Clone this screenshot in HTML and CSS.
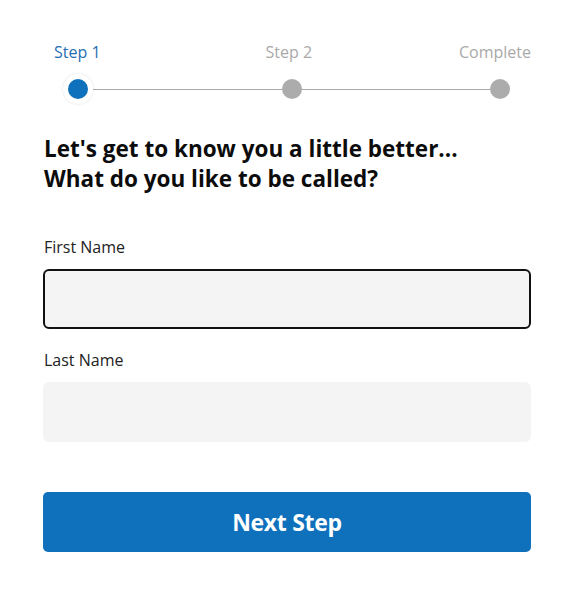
FILE: index.html
```html
<!DOCTYPE html>
<html lang="en">
<head>
<meta charset="utf-8">
<title>Step 1</title>
<link rel="stylesheet" href="styles.css">
</head>
<body>
<main class="page">
  <div class="stepper">
    <div class="step-labels">
      <span class="step-label active">Step 1</span>
      <span class="step-label step-mid">Step 2</span>
      <span class="step-label">Complete</span>
    </div>
    <div class="step-track">
      <span class="dot dot-active"></span>
      <span class="seg"></span>
      <span class="dot"></span>
      <span class="seg"></span>
      <span class="dot"></span>
    </div>
  </div>
  <h1 class="title">Let's get to know you a little better...<br>What do you like to be called?</h1>
  <form class="form">
    <label class="field">
      <span class="field-label">First Name</span>
      <input class="input input-focus" type="text">
    </label>
    <label class="field">
      <span class="field-label">Last Name</span>
      <input class="input" type="text">
    </label>
    <button class="btn" type="button">Next Step</button>
  </form>
</main>
</body>
</html>
```
FILE: styles.css
```css
html, body {
  margin: 0;
  padding: 0;
  background: #ffffff;
}
body {
  font-family: "Open Sans", "Noto Sans", sans-serif;
  color: #111111;
}
.page {
  width: 488px;
  margin-left: 43px;
  padding-top: 41px;
}
.stepper {
  display: flex;
  flex-direction: column;
}
.step-labels {
  display: flex;
  justify-content: space-between;
  padding-left: 11px;
}
.step-label {
  font-size: 16px;
  line-height: 22px;
  color: #a9a9a9;
}
.step-label.active {
  color: #1f6fb2;
}
.step-mid {
  margin-left: 18px;
}
.step-track {
  display: flex;
  align-items: center;
  margin-top: 11px;
  padding-left: 20px;
  padding-right: 21px;
  height: 30px;
}
.seg {
  flex: 1;
  height: 1px;
  background: #a8a8a8;
}
.dot {
  width: 20px;
  height: 20px;
  border-radius: 50%;
  background: #acacac;
  flex: none;
}
.dot-active {
  background: #0f71bb;
  border: 5px solid #ffffff;
  box-shadow: 0 0 3px rgba(0, 0, 0, 0.12);
}
.title {
  margin: 30px 0 0 1px;
  font-size: 22.5px;
  line-height: 30px;
  font-weight: 700;
  color: #0c0c0c;
}
.form {
  display: flex;
  flex-direction: column;
  margin-top: 43px;
}
.field {
  display: flex;
  flex-direction: column;
  gap: 12px;
}
.field + .field {
  margin-top: 21px;
}
.field-label {
  font-size: 16px;
  line-height: 20px;
  color: #222222;
  padding-left: 1px;
}
.input {
  box-sizing: border-box;
  height: 60px;
  width: 100%;
  margin: 0;
  border: none;
  border-radius: 6px;
  background: #f4f4f4;
  font: inherit;
  padding: 0 14px;
}
.input-focus {
  border: 2px solid #111111;
}
.btn {
  margin-top: 50px;
  height: 60px;
  width: 100%;
  border: none;
  border-radius: 5px;
  background: #0f71bb;
  color: #ffffff;
  font-family: "Open Sans", "Noto Sans", sans-serif;
  font-size: 23px;
  font-weight: 700;
  letter-spacing: -0.3px;
}
```
